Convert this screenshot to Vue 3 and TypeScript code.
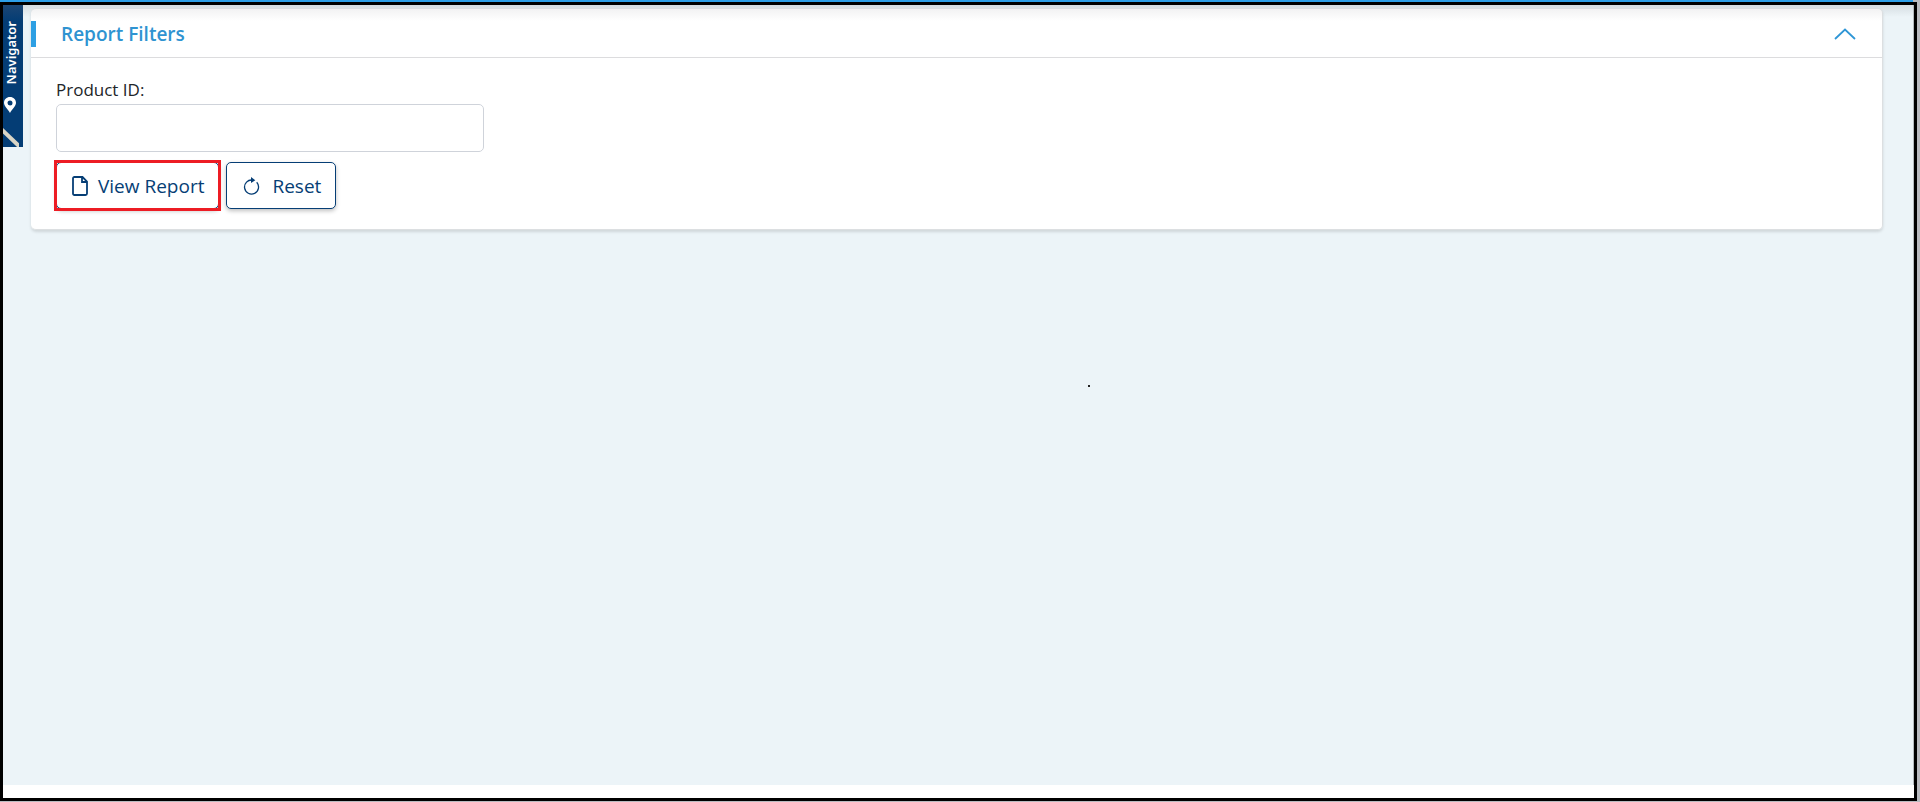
<script setup lang="ts">
import { ref } from 'vue'

const open = ref(true)
const productId = ref('')

function reset(): void {
  productId.value = ''
}
</script>

<template>
  <div class="window">
    <div class="frame">
      <main class="workspace">
        <button class="navigator" type="button">
          <span class="navigator-label">Navigator</span>
          <svg class="pin" viewBox="0 0 14 18" aria-hidden="true">
            <path
              fill="#fff"
              fill-rule="evenodd"
              d="M7 1C3.500 1 1 3.600 1 6.800c0 3.700 4 6.200 6 10.200 2-4 6-6.500 6-10.200C13 3.600 10.500 1 7 1zm0 3.500a2.500 2.500 0 1 1 0 5 2.500 2.500 0 0 1 0-5z"
            />
          </svg>
          <svg class="slash" viewBox="0 0 16 20" aria-hidden="true">
            <path d="M-3 1 L18 21" stroke="#d9d5c6" stroke-width="4" />
          </svg>
        </button>

        <section class="card">
          <header class="card-header">
            <h1>Report Filters</h1>
            <button
              class="toggle"
              type="button"
              aria-label="Toggle filters"
              :aria-expanded="open"
              @click="open = !open"
            >
              <svg viewBox="0 0 22 12" aria-hidden="true">
                <path d="M1 11 L11 1.500 L21 11" fill="none" stroke="#2f96d6" stroke-width="1.800" />
              </svg>
            </button>
          </header>
          <form v-if="open" class="card-body" @submit.prevent>
            <label for="product-id">Product ID:</label>
            <input id="product-id" v-model="productId" type="text" />
            <div class="actions">
              <button class="action highlighted" type="submit">
                <svg class="file" viewBox="0 0 16 20" aria-hidden="true">
                  <path
                    d="M1 2.500Q1 1 2.500 1H10.500L15 5.500V17.500Q15 19 13.500 19H2.500Q1 19 1 17.500ZM10 1V6H15"
                    fill="none"
                    stroke="#063e75"
                    stroke-width="1.800"
                  />
                </svg>
                View Report
              </button>
              <button class="action" type="button" @click="reset">
                <svg class="reload" viewBox="0 0 16 18" aria-hidden="true">
                  <path
                    d="M9 3.100A7 7 0 1 0 13.200 5.300"
                    fill="none"
                    stroke="#063e75"
                    stroke-width="1.300"
                  />
                  <path d="M7.500 0 L11.800 3.200 L7.500 6Z" fill="#063e75" />
                </svg>
                Reset
              </button>
            </div>
          </form>
        </section>
        <i class="speck"></i>
      </main>
    </div>
  </div>
</template>

<style>
body {
  background: #b9bbc0;
}
</style>

<style scoped>
.window {
  box-sizing: border-box;
  display: flex;
  min-height: 100vh;
  padding: 2px 3px 1px 0;
  background: linear-gradient(#2d9fe8 2px, transparent 2px) left top / calc(100% - 7px) 100% no-repeat;
  font-family: "Segoe UI", "Open Sans", "Noto Sans", sans-serif;
}

.frame {
  display: flex;
  flex: 1;
  padding-bottom: 13px;
  border: 3px solid #000;
  background: #fff;
}

.workspace {
  position: relative;
  flex: 1;
  padding: 3px 30px 16px 28px;
  border-right: 1px solid #b4babd;
  background: linear-gradient(#d5dde2, #ecf4f8 12px);
}

.navigator {
  position: absolute;
  top: 0;
  left: 0;
  display: flex;
  flex-direction: column;
  align-items: flex-start;
  justify-content: flex-end;
  width: 20px;
  height: 142px;
  padding: 0;
  border: 0;
  overflow: hidden;
  background: linear-gradient(#1c4674, #043d75 16px);
  color: #fff;
  font: 600 13px/16px "Segoe UI", "Noto Sans", sans-serif;
}

.navigator-label {
  margin-bottom: 12px;
  writing-mode: vertical-rl;
  transform: rotate(180deg);
}

.slash {
  flex: none;
  width: 16px;
  height: 20px;
}

.pin {
  flex: none;
  width: 14px;
  height: 18px;
  margin-bottom: 13px;
}

.card {
  overflow: hidden;
  border: 1px solid #dcdfe1;
  border-left: 0;
  border-radius: 5px;
  background: linear-gradient(#f2f2f3, #fff 12px);
  box-shadow: 0 2px 3px rgba(0, 0, 0, 0.12);
}

.card-header {
  display: flex;
  align-items: center;
  justify-content: space-between;
  padding: 12px 26px 10px 0;
  border-bottom: 1px solid #dcdcde;
}

h1 {
  margin: 0;
  padding-left: 25px;
  border-left: 5px solid #2d9fe3;
  color: #2f93d1;
  font-size: 19px;
  font-weight: 600;
  line-height: 26px;
}

.toggle {
  display: flex;
  padding: 0;
  border: 0;
  background: none;
}

.toggle svg {
  width: 22px;
  height: 12px;
}

.card-body {
  display: flex;
  flex-direction: column;
  align-items: flex-start;
  padding: 20px 25px;
}

label {
  padding-bottom: 2px;
  color: #212529;
  font-size: 17px;
  line-height: 24px;
}

input {
  box-sizing: border-box;
  width: 100%;
  max-width: 428px;
  height: 48px;
  padding: 0 12px;
  border: 1px solid #cfd3da;
  border-radius: 5px;
  background: #fff;
  font: inherit;
  font-size: 18px;
}

.actions {
  display: flex;
  gap: 7px;
  margin-top: 10px;
}

.action {
  display: flex;
  align-items: center;
  height: 47px;
  padding: 0 14px 0 16px;
  border: 1px solid #063e75;
  border-radius: 5px;
  background: #fff;
  box-shadow: 0 2px 4px rgba(0, 0, 0, 0.25);
  color: #063e75;
  font: inherit;
  font-size: 19px;
}

.highlighted {
  position: relative;
  padding: 0 14px 0 15px;
}

.highlighted::after {
  position: absolute;
  inset: -3px;
  border: 3px solid #ed1c24;
  content: "";
}

.file {
  width: 16px;
  height: 20px;
  margin-right: 10px;
}

.reload {
  width: 17px;
  height: 18px;
  margin-right: 12px;
}

.speck {
  position: absolute;
  top: 380px;
  left: calc(57% - 4px);
  width: 2px;
  height: 2px;
  background: #222;
}
</style>
